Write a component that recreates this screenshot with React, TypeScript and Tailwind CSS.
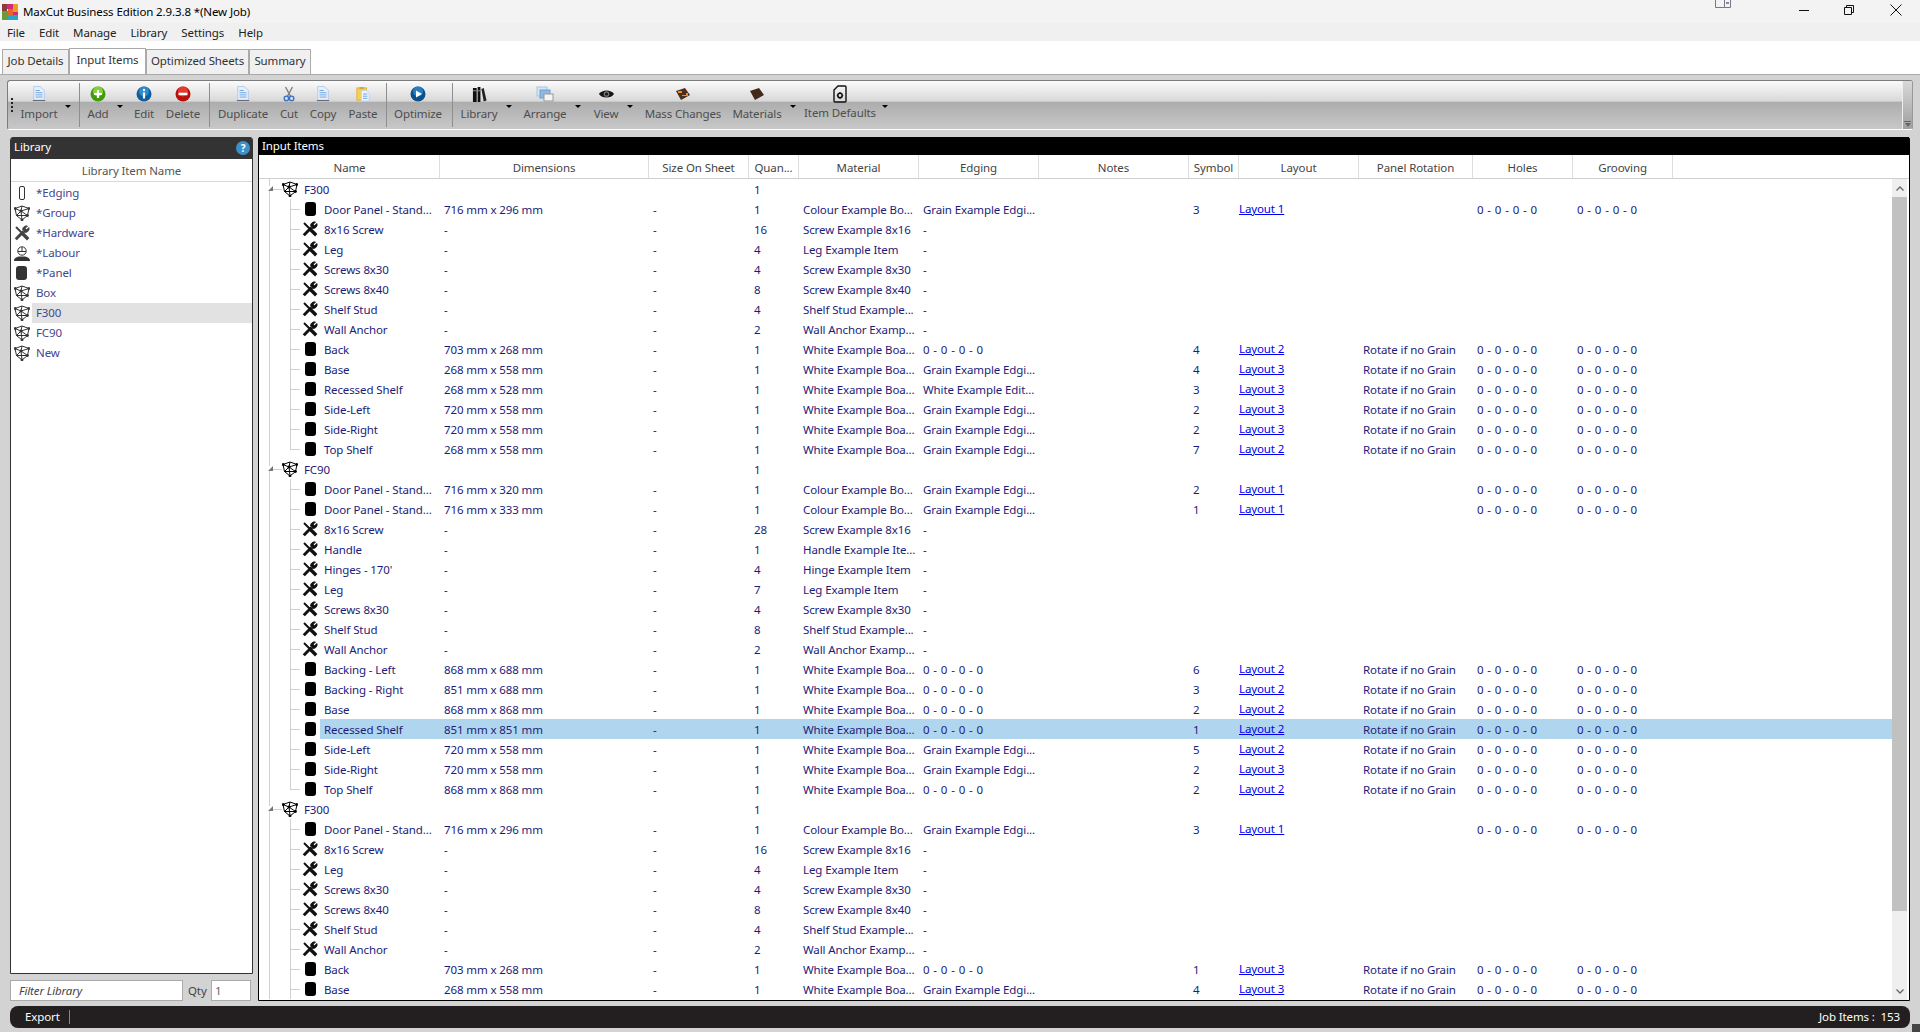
import type { ReactNode } from 'react'

type Row = {
  kind: 'group' | 'panel' | 'hardware'
  name: string
  dim?: string
  qty: string
  mat?: string
  edge?: string
  sym?: string
  layout?: string
  rot?: boolean
  holes?: boolean
  last?: boolean
}

const group = (name: string): Row => ({ kind: 'group', name, qty: '1' })
const hw = (name: string, qty: string, mat: string): Row => ({ kind: 'hardware', name, dim: '-', qty, mat, edge: '-' })
const panel = (name: string, dim: string, mat: string, edge: string, sym: string, layout: string, rot = true, last = false): Row => ({
  kind: 'panel', name, dim, qty: '1', mat, edge, sym, layout, rot, holes: true, last,
})

const white = 'White Example Boa...'
const colour = 'Colour Example Bo...'
const grain = 'Grain Example Edgi...'
const zero = '0 - 0 - 0 - 0'
const door = 'Door Panel - Stand...'

const rows: Row[] = [
  group('F300'),
  panel(door, '716 mm x 296 mm', colour, grain, '3', 'Layout 1', false),
  hw('8x16 Screw', '16', 'Screw Example 8x16'),
  hw('Leg', '4', 'Leg Example Item'),
  hw('Screws 8x30', '4', 'Screw Example 8x30'),
  hw('Screws 8x40', '8', 'Screw Example 8x40'),
  hw('Shelf Stud', '4', 'Shelf Stud Example...'),
  hw('Wall Anchor', '2', 'Wall Anchor Examp...'),
  panel('Back', '703 mm x 268 mm', white, zero, '4', 'Layout 2'),
  panel('Base', '268 mm x 558 mm', white, grain, '4', 'Layout 3'),
  panel('Recessed Shelf', '268 mm x 528 mm', white, 'White Example Edit...', '3', 'Layout 3'),
  panel('Side-Left', '720 mm x 558 mm', white, grain, '2', 'Layout 3'),
  panel('Side-Right', '720 mm x 558 mm', white, grain, '2', 'Layout 3'),
  panel('Top Shelf', '268 mm x 558 mm', white, grain, '7', 'Layout 2', true, true),
  group('FC90'),
  panel(door, '716 mm x 320 mm', colour, grain, '2', 'Layout 1', false),
  panel(door, '716 mm x 333 mm', colour, grain, '1', 'Layout 1', false),
  hw('8x16 Screw', '28', 'Screw Example 8x16'),
  hw('Handle', '1', 'Handle Example Ite...'),
  hw('Hinges - 170\'', '4', 'Hinge Example Item'),
  hw('Leg', '7', 'Leg Example Item'),
  hw('Screws 8x30', '4', 'Screw Example 8x30'),
  hw('Shelf Stud', '8', 'Shelf Stud Example...'),
  hw('Wall Anchor', '2', 'Wall Anchor Examp...'),
  panel('Backing - Left', '868 mm x 688 mm', white, zero, '6', 'Layout 2'),
  panel('Backing - Right', '851 mm x 688 mm', white, zero, '3', 'Layout 2'),
  panel('Base', '868 mm x 868 mm', white, zero, '2', 'Layout 2'),
  panel('Recessed Shelf', '851 mm x 851 mm', white, zero, '1', 'Layout 2'),
  panel('Side-Left', '720 mm x 558 mm', white, grain, '5', 'Layout 2'),
  panel('Side-Right', '720 mm x 558 mm', white, grain, '2', 'Layout 3'),
  panel('Top Shelf', '868 mm x 868 mm', white, zero, '2', 'Layout 2', true, true),
  group('F300'),
  panel(door, '716 mm x 296 mm', colour, grain, '3', 'Layout 1', false),
  hw('8x16 Screw', '16', 'Screw Example 8x16'),
  hw('Leg', '4', 'Leg Example Item'),
  hw('Screws 8x30', '4', 'Screw Example 8x30'),
  hw('Screws 8x40', '8', 'Screw Example 8x40'),
  hw('Shelf Stud', '4', 'Shelf Stud Example...'),
  hw('Wall Anchor', '2', 'Wall Anchor Examp...'),
  panel('Back', '703 mm x 268 mm', white, zero, '1', 'Layout 3'),
  panel('Base', '268 mm x 558 mm', white, grain, '4', 'Layout 3'),
]

const columns = ['Name', 'Dimensions', 'Size On Sheet', 'Quan...', 'Material', 'Edging', 'Notes', 'Symbol', 'Layout', 'Panel Rotation', 'Holes', 'Grooving']
const gridCols = 'grid grid-cols-[180px_209px_100px_50px_120px_120px_150px_50px_120px_114px_100px_100px]'

function CubeIcon({ className = '' }: { className?: string }) {
  return (
    <svg viewBox="0 0 16 16" className={`w-4 h-4 ${className}`} fill="none" stroke="currentColor" strokeWidth="1">
      <path d="M1 3.500 8 1l7 2.500-1.500 7L8 15l-5.500-4.500zM1 3.500 7 6l8-2.500M7 6l1 9M7 6 2.500 10.500 13.500 10.500 7 6M8 1 7 6" />
      <circle cx="7" cy="6" r="1.100" fill="currentColor" />
      <circle cx="8" cy="15" r="1" fill="currentColor" />
      <circle cx="1.200" cy="3.500" r="1" fill="currentColor" />
      <circle cx="14.800" cy="3.500" r="1" fill="currentColor" />
      <circle cx="13.500" cy="10.500" r="1" fill="currentColor" />
    </svg>
  )
}

function HardwareIcon({ className = '' }: { className?: string }) {
  return (
    <svg viewBox="0 0 16 16" className={`w-4 h-4 ${className}`} fill="none" stroke="currentColor">
      <path d="M1.800 14.200 9.500 6.500" strokeWidth="3" />
      <path d="M8.500 4.500a4 4 0 0 1 5-3.500l-2.200 2.300 1.300 1.300L15 2.500a4 4 0 0 1-4.500 5z" fill="currentColor" strokeWidth=".8" />
      <path d="M2 2 8 8" strokeWidth="2" />
      <path d="M8 8l6.200 6.200" strokeWidth="3.400" />
    </svg>
  )
}

function PanelIcon({ className = '' }: { className?: string }) {
  return <div className={`w-[11px] h-[14px] rounded-[3px] ${className}`} />
}

function LabourIcon() {
  return (
    <svg viewBox="0 0 16 16" className="w-4 h-4 text-[#333]">
      <path d="M0 16c0-3 2-3.500 5-4.500h6c3 1 5 1.500 5 4.500z" fill="currentColor" />
      <circle cx="8" cy="6" r="4.200" fill="#fff" stroke="currentColor" strokeWidth="1" />
      <path d="M4 6.500h8M8 2v4" stroke="currentColor" strokeWidth="1" />
    </svg>
  )
}

function PageIcon() {
  return (
    <svg viewBox="0 0 16 18" className="w-[14px] h-4">
      <path d="M2 .5h7.500L14 5v11H2z" fill="#e8f1fb" stroke="#a8c8ec" />
      <path d="M4 5h5M4 7.500h8M4 10h8M4 12.500h8" stroke="#5f9be0" />
      <path d="M1 16.500h14" stroke="#556" />
    </svg>
  )
}

function RoundIcon({ from, to, children }: { from: string; to: string; children: ReactNode }) {
  return (
    <svg viewBox="0 0 16 16" className="w-4 h-4">
      <circle cx="8" cy="8" r="7.500" fill={to} />
      <circle cx="8" cy="5.500" r="5" fill={from} opacity=".75" />
      {children}
    </svg>
  )
}

const toolIcons: Record<string, ReactNode> = {
  page: <PageIcon />,
  add: <RoundIcon from="#9de04a" to="#3f9b0b"><path d="M8 4v8M4 8h8" stroke="#fff" strokeWidth="2.200" /></RoundIcon>,
  info: <RoundIcon from="#3a9ad6" to="#0f5f9e"><path d="M8 6.500V12.500" stroke="#fff" strokeWidth="2.200" /><circle cx="8" cy="4" r="1.200" fill="#fff" /></RoundIcon>,
  remove: <RoundIcon from="#f04a3a" to="#b80f06"><path d="M3.500 8h9" stroke="#fff" strokeWidth="2.400" /></RoundIcon>,
  cut: (
    <svg viewBox="0 0 16 18" className="w-[14px] h-4" fill="none">
      <path d="M4 1 10 12M12 1 6 12" stroke="#7d8288" strokeWidth="1.600" />
      <circle cx="5" cy="14" r="2.500" stroke="#3a6fc0" strokeWidth="1.500" />
      <circle cx="11" cy="14" r="2.500" stroke="#3a6fc0" strokeWidth="1.500" />
    </svg>
  ),
  paste: (
    <svg viewBox="0 0 16 18" className="w-[14px] h-4">
      <rect x="1" y="2" width="11" height="14" fill="#f7cf54" stroke="#e0b030" />
      <rect x="4" y="1" width="5" height="2.500" fill="#d8a838" />
      <path d="M6 5h6l3 3v9H6z" fill="#eef4fc" stroke="#b9d2ee" />
      <path d="M8 9h5M8 11.500h5M8 14h5" stroke="#5f9be0" />
    </svg>
  ),
  play: <RoundIcon from="#2c8fd0" to="#0b4f8c"><path d="M6 4.500v7l6-3.500z" fill="#fff" /></RoundIcon>,
  books: (
    <svg viewBox="0 0 16 18" className="w-[15px] h-[17px]">
      <path d="M1 2h4v15H1zM6 1h3v16H6z" fill="#111" />
      <path d="M10 3 12.500 2l3 13.500-3 1z" fill="#222" />
      <path d="M1 5h4M6 5h3" stroke="#999" />
    </svg>
  ),
  arrange: (
    <svg viewBox="0 0 18 16" className="w-[18px] h-4">
      <rect x="1" y="1" width="10" height="9" fill="#d8e6f4" stroke="#a9c4de" />
      <rect x="4" y="4" width="10" height="8" fill="#8db9e4" stroke="#6f9fd0" />
      <rect x="8" y="8" width="9" height="7" fill="#f4f4f4" stroke="#9a9a9a" />
    </svg>
  ),
  eye: (
    <svg viewBox="0 0 18 12" className="w-[17px] h-[12px]">
      <path d="M1 6c3-5 13-5 16 0-3 5-13 5-16 0z" fill="#151515" />
      <circle cx="9" cy="6" r="3" fill="#777" />
      <circle cx="9" cy="6" r="1.600" fill="#111" />
    </svg>
  ),
  mass: (
    <svg viewBox="0 0 16 14" className="w-4 h-[14px]">
      <path d="M1 4 10 1l5 7-9 5z" fill="#4a2d1c" />
      <path d="M3 4h4v2H3zM7 8h4V6h2v3H7z" fill="#f08a1c" />
    </svg>
  ),
  board: (
    <svg viewBox="0 0 16 14" className="w-4 h-[14px]">
      <path d="M1 4 10 1l5 7-9 5z" fill="#43291a" />
    </svg>
  ),
  defaults: (
    <svg viewBox="0 0 14 18" className="w-[14px] h-[18px]" fill="none" stroke="#111">
      <path d="M5 1h7a1 1 0 0 1 1 1v14a1 1 0 0 1-1 1H2a1 1 0 0 1-1-1V5z" strokeWidth="1.400" />
      <circle cx="7" cy="10.500" r="2.200" strokeWidth="1.600" />
      <path d="M7 7v1M7 13v1M3.800 10.500h1M9.200 10.500h1" strokeWidth="1.200" />
    </svg>
  ),
}

function Tool({ icon, label, className, arrow, up }: { icon: string; label: string; className: string; arrow?: string; up?: boolean }) {
  return (
    <div className={`relative h-full shrink-0 flex flex-col items-center pt-[4px] ${className}`}>
      <div className="h-[18px] flex items-center justify-center">{toolIcons[icon]}</div>
      <div className={`leading-4 text-[#4d4d4d] whitespace-nowrap ${up ? 'mt-[2px]' : 'mt-[3px]'}`}>{label}</div>
      {arrow && <div className={`absolute top-[24px] w-0 h-0 border-x-[3px] border-t-[3px] border-x-transparent border-t-black ${arrow}`} />}
    </div>
  )
}

function Sep() {
  return <div className="w-px h-[44px] my-auto shrink-0 bg-[#8e8e8e]" />
}

function Toolbar() {
  return (
    <div className="mx-[7px] mt-[5px] h-[50px] flex rounded-[3px] border border-[#7c7c7c] border-b-white border-r-[#999] bg-[linear-gradient(#fbfbfb_0%,#d8d8d8_42%,#adadad_44%,#c8c8c8_100%)] overflow-hidden">
      <div className="w-[6px] shrink-0 flex flex-col justify-center gap-[2px] pl-[3px]">
        <div className="w-[2px] h-[2px] bg-[#222]" />
        <div className="w-[2px] h-[2px] bg-[#222]" />
        <div className="w-[2px] h-[2px] bg-[#222]" />
        <div className="w-[2px] h-[2px] bg-[#222]" />
      </div>
      <Tool icon="page" label="Import" className="w-[65px] pr-[15px]" arrow="left-[51px]" />
      <Sep />
      <Tool icon="add" label="Add" className="w-[44px] pr-[8px]" arrow="left-[37px]" />
      <Tool icon="info" label="Edit" className="w-[40px]" />
      <Tool icon="remove" label="Delete" className="w-[45px] pr-[7px]" />
      <Sep />
      <Tool icon="page" label="Duplicate" className="w-[66px]" />
      <Tool icon="cut" label="Cut" className="w-[26px]" />
      <Tool icon="page" label="Copy" className="w-[42px]" />
      <Tool icon="paste" label="Paste" className="w-[42px] pr-[4px]" />
      <Sep />
      <Tool icon="play" label="Optimize" className="w-[65px] pr-[3px]" />
      <Sep />
      <Tool icon="books" label="Library" className="w-[60px] pr-[8px]" arrow="left-[53px]" />
      <Tool icon="arrange" label="Arrange" className="w-[64px]" arrow="left-[62px]" />
      <Tool icon="eye" label="View" className="w-[58px]" arrow="left-[50px]" />
      <Tool icon="mass" label="Mass Changes" className="w-[96px]" />
      <Tool icon="board" label="Materials" className="w-[52px]" arrow="left-[59px]" />
      <Tool icon="defaults" label="Item Defaults" className="w-[114px]" arrow="left-[99px]" up />
      <div className="flex-1" />
      <div className="w-[10px] shrink-0 flex flex-col justify-end items-center pb-[2px] border-l border-[#eee] bg-[linear-gradient(#d8d8d8,#9f9f9f)]">
        <div className="w-[7px] h-px bg-[#666] mb-[1px]" />
        <div className="w-0 h-0 border-x-[3px] border-t-[4px] border-x-transparent border-t-[#666]" />
      </div>
    </div>
  )
}

const libraryItems: [string, ReactNode][] = [
  ['*Edging', <div className="w-[6px] h-[14px] rounded-[2px] border-[1.500px] border-[#333]" />],
  ['*Group', <CubeIcon className="text-[#333]" />],
  ['*Hardware', <HardwareIcon className="text-[#444]" />],
  ['*Labour', <LabourIcon />],
  ['*Panel', <PanelIcon className="bg-[#333]" />],
  ['Box', <CubeIcon className="text-[#333]" />],
  ['F300', <CubeIcon className="text-[#333]" />],
  ['FC90', <CubeIcon className="text-[#333]" />],
  ['New', <CubeIcon className="text-[#333]" />],
]

function Library() {
  return (
    <div className="w-[243px] shrink-0 flex flex-col">
      <div className="h-[837px] flex flex-col border border-[#333] rounded-t-[3px] bg-white">
        <div className="h-[22px] -mt-px flex items-center justify-between bg-[#333] pl-[3px] pr-[2px] rounded-t-[3px]">
          <span className="text-white pb-[2px]">Library</span>
          <div className="w-[14px] h-[14px] rounded-full bg-[#3d8fca] flex items-center justify-center text-[10px] font-bold text-white">?</div>
        </div>
        <div className="h-[23px] shrink-0 flex items-center justify-center pt-[2px] border-b border-[#d8d8d8] text-[#555]">Library Item Name</div>
        <div className="pt-px">
          {libraryItems.map(([name, icon]) => (
            <div key={name} className="h-5 flex items-center">
              <div className="w-[21px] shrink-0 flex justify-center">{icon}</div>
              <div className={`flex-1 h-5 flex items-center pl-[4px] text-[#45458f] ${name === 'F300' ? 'bg-[#e2e2e2]' : ''}`}>{name}</div>
            </div>
          ))}
        </div>
      </div>
      <div className="mt-[6px] h-[21px] flex items-center">
        <input placeholder="Filter Library" className="w-[173px] h-full border border-[#aaa] bg-white px-2 italic placeholder:text-[#444] outline-none" />
        <span className="ml-[5px] w-[23px] text-[#444]">Qty</span>
        <input defaultValue="1" className="w-[40px] h-full border border-[#aaa] bg-white px-[3px] text-[#666] outline-none" />
      </div>
    </div>
  )
}

function TreeCell({ row }: { row: Row }) {
  const isGroup = row.kind === 'group'
  return (
    <div className="relative h-5">
      <div className="absolute left-[10px] top-0 bottom-0 w-px bg-[#d0d0d0]" />
      {isGroup ? (
        <>
          <div className="absolute left-[14px] top-[10px] w-[9px] h-px bg-[#d0d0d0]" />
          <div className="absolute left-[9px] top-[7px] w-0 h-0 border-l-[5px] border-b-[5px] border-l-transparent border-b-[#777] bg-white" />
          <CubeIcon className="absolute left-[23px] top-[2px] text-black" />
          <span className="absolute left-[45px] top-px leading-5">{row.name}</span>
        </>
      ) : (
        <>
          <div className={`absolute left-[31px] top-0 w-px bg-[#d0d0d0] ${row.last ? 'h-[10px]' : 'h-5'}`} />
          <div className="absolute left-[31px] top-[10px] w-[10px] h-px bg-[#d0d0d0]" />
          {row.kind === 'panel' ? (
            <PanelIcon className="absolute left-[46px] top-[3px] bg-black" />
          ) : (
            <HardwareIcon className="absolute left-[43px] top-[2px] text-[#111]" />
          )}
          <span className="absolute left-[65px] top-px leading-5 whitespace-nowrap">{row.name}</span>
        </>
      )}
    </div>
  )
}

function ItemRow({ row, selected }: { row: Row; selected: boolean }) {
  return (
    <div className="relative h-5">
      {selected && <div className="absolute left-[61px] right-0 inset-y-0 bg-[#b0d5ef]" />}
      <div className={`relative h-5 ${gridCols} leading-5 text-[#1c1c78] whitespace-nowrap`}>
        <TreeCell row={row} />
        <div className="px-[5px] pt-px">{row.dim}</div>
        <div className="px-[5px] pt-px">{row.kind === 'group' ? '' : '-'}</div>
        <div className="px-[6px] pt-px">{row.qty}</div>
        <div className="px-[5px] pt-px">{row.mat}</div>
        <div className={`px-[5px] pt-px ${row.edge === zero ? '[word-spacing:1px]' : ''}`}>{row.edge}</div>
        <div />
        <div className="px-[5px] pt-px">{row.sym}</div>
        <div className="pl-px text-[#0000ee] underline">{row.layout}</div>
        <div className="px-[5px] pt-px">{row.rot ? 'Rotate if no Grain' : ''}</div>
        <div className="px-[5px] pt-px [word-spacing:1px]">{row.holes ? zero : ''}</div>
        <div className="px-[5px] pt-px [word-spacing:1px]">{row.holes ? zero : ''}</div>
      </div>
    </div>
  )
}

function InputItems() {
  return (
    <div className="w-[1652px] h-[864px] shrink-0 flex flex-col border border-black rounded-t-[2px] bg-white">
      <div className="h-[18px] -mt-px shrink-0 bg-black px-[3px] flex items-center text-white">Input Items</div>
      <div className={`h-[24px] shrink-0 pl-px border-b border-[#d0d0d0] ${gridCols}`}>
        {columns.map((c) => (
          <div key={c} className="flex items-center justify-center pt-[2px] border-r border-[#dedede] text-[#444]">{c}</div>
        ))}
      </div>
      <div className="flex-1 min-h-0 flex">
        <div className="w-[1633px] shrink-0 overflow-hidden">
          {rows.map((r, i) => (
            <ItemRow key={i} row={r} selected={i === 27} />
          ))}
        </div>
        <div className="w-[15px] shrink-0 flex flex-col bg-[#efefef]">
          <div className="h-[18px] flex items-center justify-center">
            <svg viewBox="0 0 8 5" className="w-2 h-[5px]" fill="none" stroke="#666" strokeWidth="1.300"><path d="M.5 4.500 4 1l3.500 3.500" /></svg>
          </div>
          <div className="h-[714px] bg-[#c1c1c1]" />
          <div className="flex-1" />
          <div className="h-[18px] flex items-center justify-center">
            <svg viewBox="0 0 8 5" className="w-2 h-[5px]" fill="none" stroke="#666" strokeWidth="1.300"><path d="M.5.500 4 4 7.500.500" /></svg>
          </div>
        </div>
      </div>
    </div>
  )
}

export default function App() {
  return (
    <div className="relative w-[1920px] h-[1032px] overflow-hidden flex flex-col bg-white font-['Noto_Sans',sans-serif] text-[11.5px] tracking-[-0.11px] text-black">
      {/* title bar */}
      <div className="relative h-[23px] shrink-0 flex items-center bg-[#f3f3f3]">
        <svg viewBox="0 0 16 16" className="ml-[2px] w-4 h-4">
          <rect x="0" y="0" width="5" height="7" fill="#8c3b3b" />
          <rect x="5" y="0" width="6" height="5" fill="#d6297a" />
          <rect x="11" y="0" width="5" height="8" fill="#e8a020" />
          <rect x="0" y="7" width="6" height="9" fill="#6a9a3a" />
          <rect x="6" y="5" width="5" height="6" fill="#e8652a" />
          <rect x="11" y="8" width="5" height="3" fill="#d6297a" />
          <rect x="6" y="11" width="10" height="5" fill="#2aa6c8" />
        </svg>
        <span className="ml-[5px]">MaxCut Business Edition 2.9.3.8 *(New Job)</span>
        <svg viewBox="0 0 16 8" className="absolute left-[1715px] top-0 w-4 h-2" fill="none" stroke="#778"><path d="M.5 0v7.500h9V0M9.500 0v7.500h6V0" /><rect x="11" y="2" width="3" height="2" fill="#889" stroke="none" /></svg>
        <svg viewBox="0 0 10 1" className="absolute left-[1799px] top-[10px] w-[10px] h-px"><rect width="10" height="1" fill="#111" /></svg>
        <svg viewBox="0 0 10 10" className="absolute left-[1844px] top-[5px] w-[10px] h-[10px]" fill="none" stroke="#111"><path d="M.5 2.500h7v7h-7zM2.500 2.500v-2h7v7h-2" /></svg>
        <svg viewBox="0 0 12 12" className="absolute left-[1890px] top-[4px] w-3 h-3" fill="none" stroke="#111"><path d="M.5.500l11 11M11.500.500l-11 11" /></svg>
      </div>
      {/* menu */}
      <div className="h-[18px] shrink-0 flex items-center gap-[14px] pl-[7px] pt-px bg-[#f0f0f0] text-[#222]">
        {['File', 'Edit', 'Manage', 'Library', 'Settings', 'Help'].map((m) => (
          <span key={m}>{m}</span>
        ))}
      </div>
      {/* tabs */}
      <div className="h-[33px] shrink-0 flex items-end pl-[2px] bg-white text-[#333]">
        <div className="w-[67px] h-[25px] flex items-center justify-center pb-[2px] border border-b-0 border-[#aaa] bg-[#f0f0f0]">Job Details</div>
        <div className="w-[77px] h-[26px] flex items-center justify-center pb-[3px] border border-b-0 border-[#aaa] bg-white">Input Items</div>
        <div className="w-[103px] h-[25px] flex items-center justify-center pb-[2px] border border-b-0 border-[#aaa] bg-[#f0f0f0]">Optimized Sheets</div>
        <div className="w-[62px] h-[25px] flex items-center justify-center pb-[2px] border border-b-0 border-[#aaa] bg-[#f0f0f0]">Summary</div>
      </div>
      {/* main */}
      <div className="flex-1 min-h-0 flex flex-col border-t border-[#a9a9a9] bg-[#d3d3d3]">
        <Toolbar />
        <div className="mt-[7px] pl-[10px] flex gap-[5px]">
          <Library />
          <InputItems />
        </div>
        <div className="mx-[10px] mt-[5px] h-[22px] flex items-center justify-between rounded-[8px] bg-[#231f20] text-white pl-[15px] pr-[10px] pb-px">
          <div className="flex items-center">
            <span className="w-[44px]">Export</span>
            <div className="w-px h-[14px] bg-[#888]" />
          </div>
          <span className="whitespace-pre">Job Items :  153</span>
        </div>
      </div>
      <div className="absolute right-0 bottom-0 w-2 h-2 bg-[#444]" />
    </div>
  )
}
